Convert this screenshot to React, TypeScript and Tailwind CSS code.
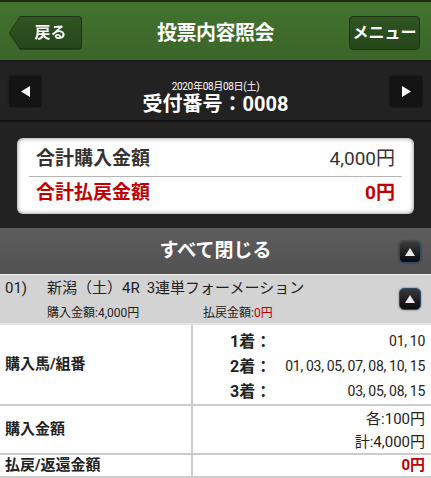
import React from "react";

const font = { fontFamily: 'Roboto, "Noto Sans CJK JP", sans-serif' };

function UpButton() {
  return (
    <div className="w-[22px] h-[22px] rounded-[5px] border border-[#2a4a6e] bg-gradient-to-b from-[#3a3a3a] to-[#0a0a0a] flex items-center justify-center shadow-[0_0_2px_rgba(0,0,0,0.6)]">
      <svg width="10" height="8" viewBox="0 0 10 8">
        <path d="M5 0L10 8H0Z" fill="#e8e8e8" />
      </svg>
    </div>
  );
}

function ArrowButton({ dir }: { dir: "left" | "right" }) {
  return (
    <div className="w-[32px] h-[31px] rounded-[3px] bg-[#141414] flex items-center justify-center shadow-[0_0_2px_rgba(0,0,0,0.8)]">
      <svg width="9" height="11" viewBox="0 0 9 11">
        {dir === "left" ? (
          <path d="M0 5.5L9 0V11Z" fill="#fff" />
        ) : (
          <path d="M9 5.5L0 0V11Z" fill="#fff" />
        )}
      </svg>
    </div>
  );
}

export default function App() {
  const picks = [
    { label: "1着：", value: "01, 10" },
    { label: "2着：", value: "01, 03, 05, 07, 08, 10, 15" },
    { label: "3着：", value: "03, 05, 08, 15" },
  ];

  return (
    <div className="w-[431px] h-[478px] overflow-hidden bg-white" style={font}>
      {/* Header */}
      <header className="h-[62px] pt-[3px] border-t-2 border-[#1c2c14] border-b-2 border-b-[#1b1b1b] bg-gradient-to-b from-[#43732f] to-[#3a6529] flex items-center justify-between pl-[9px] pr-[11px]">
        <div className="relative w-[73px] h-[33px] drop-shadow-[0_1px_0_rgba(0,0,0,0.35)]">
          <div className="absolute inset-0 bg-[#1d3513] [clip-path:polygon(11px_0,100%_0,100%_100%,11px_100%,0_50%)] rounded-r-[4px]" />
          <div className="absolute inset-[1px] bg-gradient-to-b from-[#2f5421] to-[#27471b] [clip-path:polygon(10px_0,100%_0,100%_100%,10px_100%,0_50%)] rounded-r-[3px] flex items-center justify-center pl-[10px]">
            <span className="text-white font-bold text-[16px] leading-none">戻る</span>
          </div>
        </div>
        <h1 className="text-white font-bold text-[20px] leading-none tracking-[-0.5px]">投票内容照会</h1>
        <div className="w-[71px] h-[34px] rounded-[4px] border border-[#1d3513] bg-gradient-to-b from-[#2f5421] to-[#27471b] flex items-center justify-center">
          <span className="text-white font-bold text-[16px] leading-none">メニュー</span>
        </div>
      </header>

      {/* Receipt nav */}
      <div className="h-[60px] bg-[#222222] border-b-2 border-[#141414] flex items-center justify-between px-[9px]">
        <ArrowButton dir="left" />
        <div className="flex flex-col items-center text-white mt-[14px]">
          <span className="text-[10px] leading-[12px] tracking-[-0.3px]">2020年08月08日(土)</span>
          <span className="text-[20px] font-bold leading-[22px]">受付番号：0008</span>
        </div>
        <ArrowButton dir="right" />
      </div>

      {/* Summary card */}
      <div className="bg-[#222222] pt-[16px] pb-[14px] px-[17px]">
        <div className="h-[76px] rounded-[6px] bg-white shadow-[inset_0_0_4px_rgba(0,0,0,0.5)] px-[12px] flex flex-col justify-center">
          <div className="flex justify-between items-center px-[7px] h-[34px] border-b border-[#b5b5b5]">
            <span className="text-[19px] font-bold text-[#333]">合計購入金額</span>
            <span className="text-[19px] text-[#333]">4,000円</span>
          </div>
          <div className="flex justify-between items-center px-[7px] h-[32px]">
            <span className="text-[19px] font-bold text-[#c00000]">合計払戻金額</span>
            <span className="text-[19px] font-bold text-[#c00000]">0円</span>
          </div>
        </div>
      </div>

      {/* Collapse all */}
      <div className="relative h-[47px] bg-gradient-to-b from-[#5c5c5c] to-[#525252] border-b border-[#f0f0f0] flex items-center justify-center">
        <span className="text-white font-bold text-[19px]">すべて閉じる</span>
        <div className="absolute right-[10px] top-[13px]">
          <UpButton />
        </div>
      </div>

      {/* Bet header */}
      <div className="h-[50px] bg-[#d3d3d3] border-b-2 border-[#e6e6e6] flex items-center pr-[10px]">
        <div className="flex-1 flex flex-col">
          <div className="flex items-center text-[15px] text-[#222] leading-[20px]">
            <span className="w-[47px] pl-[5px]">01)</span>
            <span>新潟（土）4R</span>
            <span className="ml-[7px]">3連単フォーメーション</span>
          </div>
          <div className="flex text-[12px] leading-[16px] text-[#222] pl-[47px] mt-[7px]">
            <span className="w-[156px]">購入金額:4,000円</span>
            <span>
              払戻金額:<span className="text-[#c00000]">0円</span>
            </span>
          </div>
        </div>
        <UpButton />
      </div>

      {/* Detail table */}
      <div className="text-[#222] text-[15px]">
        <div className="flex border-b-2 border-[#cccccc]">
          <div className="w-[193px] border-r-2 border-[#cccccc] flex items-center pl-[5px] font-bold">購入馬/組番</div>
          <div className="flex-1 pt-[4px] pr-[6px]">
            {picks.map((p) => (
              <div key={p.label} className="flex h-[25px] items-center whitespace-nowrap">
                <span className="pl-[37px] w-[86px] text-[16px] font-bold">{p.label}</span>
                <span className="flex-1 text-right text-[14px] tracking-[-0.3px]">{p.value}</span>
              </div>
            ))}
          </div>
        </div>
        <div className="flex border-b-2 border-[#cccccc]">
          <div className="w-[193px] border-r-2 border-[#cccccc] flex items-center pl-[5px] font-bold">購入金額</div>
          <div className="flex-1 pt-[2px] pr-[6px] text-right">
            <div className="h-[23px] flex items-center justify-end">各:100円</div>
            <div className="h-[22px] flex items-center justify-end">計:4,000円</div>
          </div>
        </div>
        <div className="flex border-b-2 border-[#cccccc] h-[23px]">
          <div className="w-[193px] border-r-2 border-[#cccccc] flex items-center pl-[5px] font-bold">払戻/返還金額</div>
          <div className="flex-1 pr-[6px] flex items-center justify-end text-[#c00000] font-bold">0円</div>
        </div>
      </div>
    </div>
  );
}
